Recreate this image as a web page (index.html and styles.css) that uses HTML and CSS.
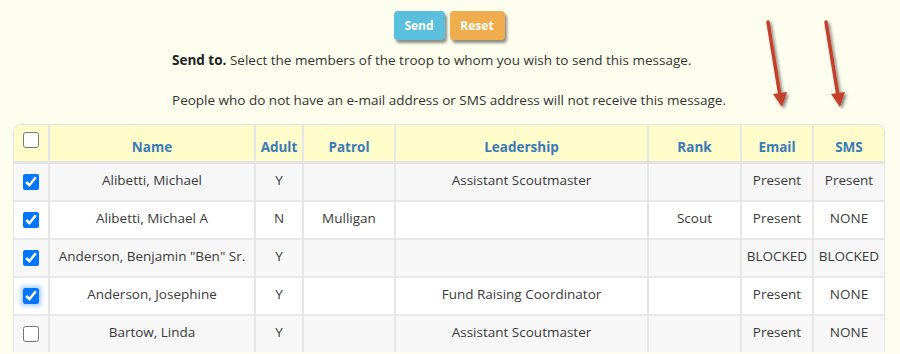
FILE: index.html
```html
<!DOCTYPE html>
<html>
<head>
<meta charset="utf-8">
<link rel="stylesheet" href="styles.css">
</head>
<body>
<div class="page">
  <div class="actions">
    <button class="btn btn-send">Send</button>
    <button class="btn btn-reset">Reset</button>
  </div>
  <div class="intro">
    <p><b>Send to.</b> Select the members of the troop to whom you wish to send this message.</p>
    <p>People who do not have an e-mail address or SMS address will not receive this message.</p>
  </div>
  <div class="table-wrap">
    <table class="members">
      <colgroup>
        <col class="c-check"><col class="c-name"><col class="c-adult"><col class="c-patrol">
        <col class="c-lead"><col class="c-rank"><col class="c-email"><col class="c-sms">
      </colgroup>
      <thead>
        <tr>
          <th><input type="checkbox"></th>
          <th>Name</th>
          <th>Adult</th>
          <th>Patrol</th>
          <th>Leadership</th>
          <th>Rank</th>
          <th>Email</th>
          <th>SMS</th>
        </tr>
      </thead>
      <tbody>
        <tr>
          <td><input type="checkbox" checked></td>
          <td>Alibetti, Michael</td><td>Y</td><td></td><td>Assistant Scoutmaster</td><td></td><td>Present</td><td>Present</td>
        </tr>
        <tr>
          <td><input type="checkbox" checked></td>
          <td>Alibetti, Michael A</td><td>N</td><td>Mulligan</td><td></td><td>Scout</td><td>Present</td><td>NONE</td>
        </tr>
        <tr>
          <td><input type="checkbox" checked></td>
          <td>Anderson, Benjamin "Ben" Sr.</td><td>Y</td><td></td><td></td><td></td><td>BLOCKED</td><td>BLOCKED</td>
        </tr>
        <tr>
          <td><input type="checkbox" class="focused" checked></td>
          <td>Anderson, Josephine</td><td>Y</td><td></td><td>Fund Raising Coordinator</td><td></td><td>Present</td><td>NONE</td>
        </tr>
        <tr>
          <td><input type="checkbox"></td>
          <td>Bartow, Linda</td><td>Y</td><td></td><td>Assistant Scoutmaster</td><td></td><td>Present</td><td>NONE</td>
        </tr>
      </tbody>
    </table>
  </div>
  <svg class="arrows" width="120" height="110" viewBox="0 0 120 110">
    <defs>
      <filter id="sh" x="-50%" y="-20%" width="200%" height="140%">
        <feDropShadow dx="2" dy="2" stdDeviation="1.5" flood-color="#000" flood-opacity="0.45"/>
      </filter>
    </defs>
    <g filter="url(#sh)" stroke="#c53f2c" stroke-width="3.5" fill="none" stroke-linecap="round">
      <line x1="8" y1="4" x2="20" y2="78"/>
      <line x1="66" y1="4" x2="78" y2="78"/>
    </g>
    <g filter="url(#sh)" fill="#c53f2c">
      <polygon points="13,76 27,74 22,89"/>
      <polygon points="71,76 85,74 80,89"/>
    </g>
  </svg>
</div>
</body>
</html>
```
FILE: styles.css
```css
html, body {
  margin: 0;
  padding: 0;
  background: #fefeee;
}
body {
  font-family: "Open Sans", "Noto Sans", sans-serif;
  font-size: 13.5px;
  color: #333;
}
.page {
  position: relative;
  padding: 11px 15px 0 13px;
}
.actions {
  display: flex;
  justify-content: center;
  gap: 5px;
}
.btn {
  border: none;
  border-radius: 4px;
  color: #fff;
  font-family: inherit;
  font-weight: 700;
  font-size: 12px;
  height: 29px;
  padding: 0 10px;
  box-shadow: 2px 3px 3px rgba(0,0,0,0.45);
  cursor: pointer;
}
.btn-send { background: #5bc0de; width: 51px; }
.btn-reset { background: #f0ad4e; width: 55px; }
.intro {
  width: fit-content;
  margin: 0 auto;
}
.intro p {
  margin: 0;
  line-height: 20px;
}
.intro p:first-child { margin-top: 10px; }
.intro p + p { margin-top: 20px; }
.intro b { font-weight: 700; color: #222; }
.table-wrap {
  margin-top: 14px;
  border: 1px solid #e4e4e4;
  border-bottom: none;
  border-radius: 8px 8px 0 0;
  overflow: hidden;
}
.members {
  width: 100%;
  border-collapse: collapse;
  table-layout: fixed;
}
.c-check { width: 35px; }
.c-name { width: 206px; }
.c-adult { width: 48px; }
.c-patrol { width: 92px; }
.c-lead { width: 253px; }
.c-rank { width: 93px; }
.c-email { width: 72px; }
.c-sms { width: 71px; }
.members th, .members td {
  border-left: 2px solid #e6e6e6;
  text-align: center;
  padding: 0 2px;
  white-space: nowrap;
  overflow: hidden;
}
.members th:first-child, .members td:first-child { border-left: none; }
.members th {
  background: #fefcca;
  color: #3a7ab8;
  font-weight: 700;
  font-size: 13.5px;
  height: 37px;
  border-bottom: 3px solid #e2e2e2;
  vertical-align: middle;
  padding-top: 9px;
  padding-bottom: 0;
  box-sizing: border-box;
}
.members td {
  height: 33px;
  padding-bottom: 3px;
  border-top: 2px solid #e8e8e8;
  color: #3a3a3a;
}
.members tbody tr:first-child td { border-top: none; }
.members tbody tr:nth-child(odd) td { background: #f7f7f7; }
.members tbody tr:nth-child(even) td { background: #fff; }
.members input[type="checkbox"] {
  width: 16px;
  height: 16px;
  margin: 0;
  vertical-align: middle;
}
.members td input[type="checkbox"] {
  position: relative;
  top: 1px;
}
.members th input[type="checkbox"] {
  position: relative;
  top: -8px;
}
.members input.focused {
  box-shadow: 0 0 4px 2px rgba(80, 150, 255, 0.5);
  border-radius: 3px;
}
.arrows {
  position: absolute;
  left: 760px;
  top: 18px;
}
```
